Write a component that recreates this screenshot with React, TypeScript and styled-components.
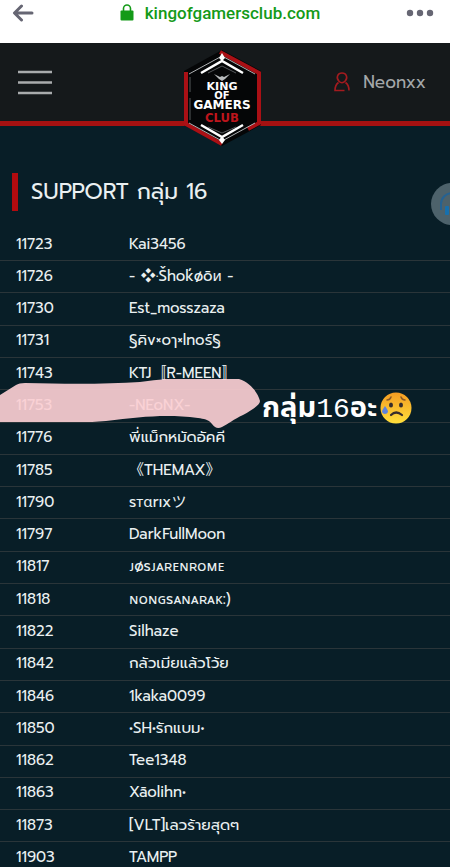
import React from "react";
import styled, { createGlobalStyle } from "styled-components";

const GlobalStyle = createGlobalStyle`
  * { box-sizing: border-box; }
  html { scrollbar-width: none; background: #081e27; }
  body { margin: 0; overflow-x: hidden; }
  body, button { font-family: Prompt, "Noto Sans", "Noto Sans Thai", "Noto Sans CJK JP", sans-serif; }
`;

const Page = styled.div`
  position: relative;
  min-height: 100vh;
  overflow: hidden;
  background: #081e27;
  color: #eaf0f1;
`;

const IconButton = styled.button`
  display: flex;
  padding: 0;
  border: 0;
  background: none;
  color: inherit;
  cursor: pointer;
`;

const BrowserBar = styled.div`
  display: flex;
  align-items: center;
  justify-content: space-between;
  height: 43px;
  padding: 0 16px 18px 12px;
  background: #fff;
  color: #666673;
`;

const Address = styled.a`
  display: flex;
  align-items: center;
  gap: 11px;
  color: #149a18;
  font: 500 17px/24px Roboto, sans-serif;
  text-decoration: none;
`;

const SiteHeader = styled.header`
  display: grid;
  grid-template-columns: 1fr auto 1fr;
  grid-template-rows: 100%;
  height: 83px;
  padding: 0 24px 0 18px;
  background: #15191b;
  border-bottom: 5px solid #a51111;
`;

const MenuButton = styled(IconButton)`
  align-self: center;
  justify-self: start;
  color: #a9acad;
`;

const Logo = styled.a`
  display: block;
  width: 80px;
  height: 98px;
  margin-top: 6px;
  position: relative;
`;

const User = styled.a`
  display: flex;
  align-items: center;
  justify-self: end;
  gap: 13px;
  color: #a3a7a9;
  font-size: 17px;
  line-height: 24px;
  text-decoration: none;
`;

const Heading = styled.h1`
  margin: 47px 12px 18px;
  padding-left: 13px;
  border-left: 6px solid #b20b0f;
  font-size: 22px;
  font-weight: 400;
  line-height: 38px;
`;

const Roster = styled.section`
  position: relative;
`;

const Table = styled.table`
  width: 100%;
  height: 646px;
  border-collapse: collapse;
  table-layout: fixed;
  font-size: 15px;
  line-height: 20px;
`;

const Cell = styled.td<{ $id?: boolean }>`
  width: ${(p) => (p.$id ? "129px" : "auto")};
  padding: 0 0 2px ${(p) => (p.$id ? "16px" : "0")};
  border-bottom: 1px solid #2a3539;
  white-space: nowrap;
`;

const Marker = styled.svg`
  position: absolute;
  left: 0;
  top: 150px;
`;

const Note = styled.div`
  position: absolute;
  left: 262px;
  top: 157px;
  display: flex;
  align-items: center;
  gap: 3px;
  color: #fff;
  font-family: "Noto Sans", "Noto Sans Thai", sans-serif;
  font-size: 29px;
  font-weight: 700;
  line-height: 40px;
  white-space: nowrap;
`;

const NoteNumber = styled.span`
  font-family: "Liberation Mono", monospace;
  font-size: 28px;
  font-weight: 400;
`;

const Support = styled(IconButton)`
  position: absolute;
  right: -23px;
  top: 183px;
`;

const members: [string, string][] = [
  ["11723", "Kai3456"],
  ["11726", "- ❖·Šhoḱøōи -"],
  ["11730", "Est_mosszaza"],
  ["11731", "§คิv×oๅ×lnoร์§"],
  ["11743", "KTJ〚R-MEEN〛"],
  ["11753", "-NEoNX-"],
  ["11776", "พี่แม็กหมัดอัคคี"],
  ["11785", "《THEMAX》"],
  ["11790", "sтαrıxツ"],
  ["11797", "DarkFullMoon"],
  ["11817", "ᴊøsᴊᴀʀᴇɴʀᴏᴍᴇ"],
  ["11818", "ɴᴏɴɢsᴀɴᴀʀᴀᴋ:)"],
  ["11822", "Silhaze"],
  ["11842", "กลัวเมียแล้วโว้ย"],
  ["11846", "1kaka0099"],
  ["11850", "•SH•รักแบม•"],
  ["11862", "Tee1348"],
  ["11863", "Xāolihn•"],
  ["11873", "[VLT]เลวร้ายสุดๆ"],
  ["11903", "TAMPP"],
];

const BackIcon = () => (
  <svg width="22" height="18" viewBox="0 0 22 18" fill="none" stroke="currentColor" strokeWidth="3" strokeLinecap="round" strokeLinejoin="round">
    <path d="M9.5 2 2.5 9l7 7M3 9h17" />
  </svg>
);

const LockIcon = () => (
  <svg width="14" height="17" viewBox="0 0 14 17">
    <path d="M3.5 7V4.5a3.5 3.5 0 0 1 7 0V7" fill="none" stroke="#149a18" strokeWidth="1.6" />
    <rect x="0.5" y="6.5" width="13" height="10" rx="1" fill="#149a18" />
  </svg>
);

const DotsIcon = () => (
  <svg width="28" height="8" viewBox="0 0 28 8" fill="currentColor">
    <circle cx="4" cy="4" r="3.2" />
    <circle cx="14" cy="4" r="3.2" />
    <circle cx="24" cy="4" r="3.2" />
  </svg>
);

const MenuIcon = () => (
  <svg width="34" height="25" viewBox="0 0 34 25" stroke="currentColor" strokeWidth="2.6">
    <path d="M0 2h34M0 12.5h34M0 23h34" />
  </svg>
);

const UserIcon = () => (
  <svg width="16" height="20" viewBox="0 0 16 20" fill="none" stroke="#a31b1f" strokeWidth="1.6">
    <path d="M5 9.3C1.5 5.5 3.8 1 8 1s6.500 4.500 3 8.300c-1.800 1.900-4.200 1.900-6 0Z" />
    <path d="M4.500 10.500C2.500 12 1 14.500 1 18.500h9.500M11.500 10.500c2 1.500 3.500 4 3.500 8" />
  </svg>
);

const LogoArt = () => (
  <svg width="80" height="98" viewBox="0 0 80 98">
    <path d="M40 1 79 22v54L40 97 2 76V22Z" fill="#050607" />
    <path d="M38 3 77 24v50L66 80" fill="none" stroke="#aa1015" strokeWidth="4" />
    <path d="M4 23v52l36 20" fill="none" stroke="#aa1015" strokeWidth="4" />
    <path d="M7 25 40 7l33 18M7 74l33 18 33-18" fill="none" stroke="#aeb1b3" strokeWidth="1" />
    <path d="M19 24 40 12l21 12M19 76l21 12 21-12" fill="none" stroke="#fff" strokeWidth="2.500" />
    <path d="M26 24 40 17l14 7M26 78l14 6 14-6M8 28v15M8 49v22" fill="none" stroke="#55595b" strokeWidth="1" />
    <path d="m40 4 3 5-3 3-3-3ZM40 87l3 4-3 4-3-4Z" fill="#fff" />
    <path d="m32 25 6 3 2-1 2 1 6-3-5 5-3 2-3-2Z" fill="#b8bbbc" />
    <g textAnchor="middle" fontFamily="DejaVu Sans, sans-serif" fontWeight="700" fill="#fff">
      <text x="40" y="41" fontSize="11">KING</text>
      <text x="40" y="50" fontSize="10">OF</text>
      <text x="40" y="60" fontSize="12">GAMERS</text>
      <text x="40" y="73" fontSize="13" fill="#bd151c" fontFamily="Liberation Sans Narrow, DejaVu Sans Condensed, sans-serif">CLUB</text>
    </g>
  </svg>
);

const SadFace = () => (
  <svg width="32" height="32" viewBox="0 0 32 32">
    <defs>
      <linearGradient id="face" x1="0" y1="0" x2="0" y2="1">
        <stop offset="0" stopColor="#f49c22" />
        <stop offset="1" stopColor="#ffdf3b" />
      </linearGradient>
    </defs>
    <circle cx="16" cy="16" r="15.500" fill="url(#face)" />
    <path d="M7 8q3 0 4-3M21 5q1 3 4 3" fill="none" stroke="#8b5825" strokeWidth="1.500" strokeLinecap="round" />
    <ellipse cx="11" cy="13" rx="2" ry="2.500" fill="#382d2c" />
    <ellipse cx="21" cy="13" rx="2" ry="2.500" fill="#382d2c" />
    <path d="M11 23q5-5 11 0" fill="none" stroke="#382d2c" strokeWidth="2.200" strokeLinecap="round" />
    <path d="M5 14c-2 3-3 4-3 6a3.200 3.200 0 0 0 6 0c0-2-1-3-3-6Z" fill="#5c82de" />
  </svg>
);

const HeadsetIcon = () => (
  <svg width="42" height="42" viewBox="0 0 42 42">
    <circle cx="21" cy="21" r="21" fill="#4d626b" />
    <path d="M10 27v-6a10 10 0 0 1 22 0v6" fill="none" stroke="#256292" strokeWidth="2" />
    <rect x="14" y="23" width="4" height="9" rx="1" fill="#1770ad" />
    <rect x="25" y="23" width="4" height="9" rx="1" fill="#1770ad" />
  </svg>
);

export default function App() {
  return (
    <Page>
      <GlobalStyle />
      <BrowserBar>
        <IconButton aria-label="Back"><BackIcon /></IconButton>
        <Address href="#"><LockIcon />kingofgamersclub.com</Address>
        <IconButton aria-label="More options"><DotsIcon /></IconButton>
      </BrowserBar>
      <SiteHeader>
        <MenuButton aria-label="Menu"><MenuIcon /></MenuButton>
        <Logo href="#" aria-label="King of Gamers Club"><LogoArt /></Logo>
        <User href="#"><UserIcon />Neonxx</User>
      </SiteHeader>
      <main>
        <Heading>SUPPORT กลุ่ม 16</Heading>
        <Roster>
          <Table>
            <tbody>
              {members.map(([id, name]) => (
                <tr key={id}>
                  <Cell $id>{id}</Cell>
                  <Cell>{name}</Cell>
                </tr>
              ))}
            </tbody>
          </Table>
          <Marker width="262" height="52" viewBox="0 0 262 52" aria-hidden="true">
            <path d="M0 16 16 6q3-2 9-2 70 2 115-1 50-7 99-3c12 4 19 14 21 22 0 4-8 9-17 14-9 4-15 9-21 12-4 2-7 1-10-3-4-5-8-5-14-6-33-4-57-1-92 3-10 1-18 1-27 1H0Z" fill="#fbced3" fillOpacity="0.92" />
          </Marker>
          <Note>
            <span>กลุ่ม<NoteNumber>16</NoteNumber>อะ</span>
            <SadFace />
          </Note>
        </Roster>
      </main>
      <Support aria-label="Customer support"><HeadsetIcon /></Support>
    </Page>
  );
}
